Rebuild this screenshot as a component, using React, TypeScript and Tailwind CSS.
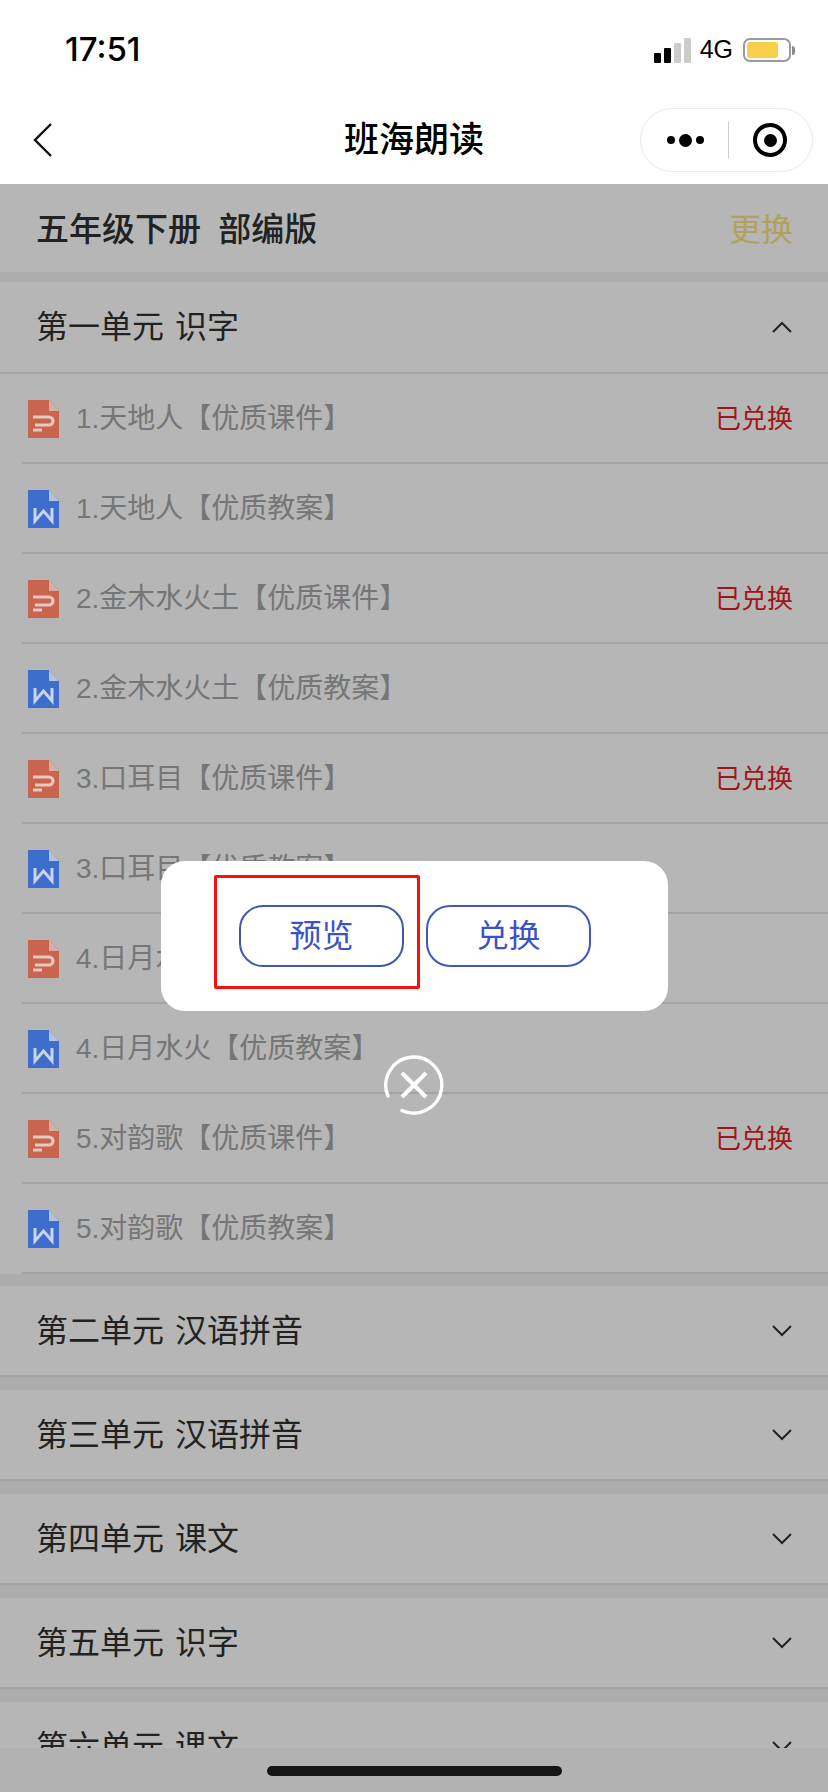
import React from 'react';

const FONT = "font-['Liberation_Sans','Noto_Sans_CJK_SC',sans-serif]";

const rows = [
  { type: 'p', title: '1.天地人【优质课件】', done: true },
  { type: 'w', title: '1.天地人【优质教案】', done: false },
  { type: 'p', title: '2.金木水火土【优质课件】', done: true },
  { type: 'w', title: '2.金木水火土【优质教案】', done: false },
  { type: 'p', title: '3.口耳目【优质课件】', done: true },
  { type: 'w', title: '3.口耳目【优质教案】', done: false },
  { type: 'p', title: '4.日月水火【优质课件】', done: false },
  { type: 'w', title: '4.日月水火【优质教案】', done: false },
  { type: 'p', title: '5.对韵歌【优质课件】', done: true },
  { type: 'w', title: '5.对韵歌【优质教案】', done: false },
];

const units = ['第二单元 汉语拼音', '第三单元 汉语拼音', '第四单元 课文', '第五单元 识字', '第六单元 课文'];

// sits above the scrim so it keeps the saturated colours of the picture
const FileIcon = ({ type }: { type: string }) => (
  <svg width="31" height="38" viewBox="0 0 31 38" className="shrink-0 relative z-20">
    <path d="M0 0H21L31 11V38H0Z" fill={type === 'p' ? '#c9654f' : '#3f6dcc'} />
    <path d="M21 0L31 11H21Z" fill={type === 'p' ? '#d2b0a6' : '#b4c2d6'} />
    {type === 'p' ? (
      <path d="M5 17H21A4 4 0 0 1 21 25H7M5 30H14" fill="none" stroke="#e6c8be" strokeWidth="3.2" />
    ) : (
      <path d="M7 18V31L15.5 21L24 31V18" fill="none" stroke="#c8d4ee" strokeWidth="3" />
    )}
  </svg>
);

const Chevron = ({ up }: { up?: boolean }) => (
  <svg width="22" height="14" viewBox="0 0 22 14">
    <path d={up ? 'M2 12L11 3L20 12' : 'M2 2L11 11L20 2'} fill="none" stroke="#333333" strokeWidth="2" />
  </svg>
);

const UnitHeader = ({ title, up, tall }: { title: string; up?: boolean; tall?: boolean }) => (
  <div className={`${tall ? 'h-[92px]' : 'h-[91px]'} shrink-0 flex items-center justify-between pl-[36px] pr-[35px] bg-white border-b-2 border-[#e6e6e6]`}>
    <span className="text-[32px] text-[#303030] [word-spacing:2px]">{title}</span>
    <Chevron up={up} />
  </div>
);

export default function App() {
  return (
    <div className={`${FONT} relative w-[828px] h-[1792px] overflow-hidden bg-white flex flex-col`}>
      <div className="h-[88px] shrink-0 flex items-center justify-between pl-[65px] pr-[33px] pt-[12px]">
        <span className="text-[33px] font-['Inter',sans-serif] font-medium text-black">17:51</span>
        <div className="flex items-center">
          <div className="flex items-end gap-[3px] h-[25px] mr-[9px]">
            <div className="w-[7px] h-[10px] bg-black rounded-[1px]" />
            <div className="w-[7px] h-[15px] bg-black rounded-[1px]" />
            <div className="w-[7px] h-[20px] bg-[#cccccc] rounded-[1px]" />
            <div className="w-[7px] h-[25px] bg-[#cccccc] rounded-[1px]" />
          </div>
          <span className="text-[25px] text-black mr-[10px]">4G</span>
          <div className="w-[48px] h-[24px] rounded-[7px] border-2 border-[#9a9a9a] p-[2px]">
            <div className="w-[31px] h-full rounded-[3px] bg-[#f8cf4a]" />
          </div>
          <div className="w-[3px] h-[9px] ml-[1px] bg-[#8a8a8a] rounded-r-full" />
        </div>
      </div>

      <div className="relative h-[96px] shrink-0 flex items-center justify-between pl-[33px] pr-[15px] pt-[8px]">
        <svg width="20" height="34" viewBox="0 0 20 34">
          <path d="M18 1L2 17L18 33" fill="none" stroke="#111111" strokeWidth="2.4" />
        </svg>
        <span className="absolute left-0 right-0 text-center text-[35px] font-medium text-black">班海朗读</span>
        <div className="w-[173px] h-[64px] rounded-full border border-[#ececec] flex items-center pl-[3px]">
          <div className="flex-1 flex items-center justify-center gap-[4px]">
            <div className="w-[8px] h-[8px] rounded-full bg-black" />
            <div className="w-[13px] h-[13px] rounded-full bg-black" />
            <div className="w-[8px] h-[8px] rounded-full bg-black" />
          </div>
          <div className="w-px h-[36px] bg-[#cccccc]" />
          <div className="flex-1 flex items-center justify-center">
            <div className="w-[34px] h-[34px] rounded-full border-[4px] border-black flex items-center justify-center">
              <div className="w-[13px] h-[13px] rounded-full bg-black" />
            </div>
          </div>
        </div>
      </div>

      <div className="flex-1 bg-[#f3f3f3] overflow-hidden flex flex-col">
        <div className="h-[88px] shrink-0 bg-white flex items-center justify-between pl-[36px] pr-[35px] pt-[3px]">
          <span className="text-[33px] font-medium text-[#303030] [word-spacing:8px]">五年级下册 部编版</span>
          <span className="text-[32px] text-[#f6e582]">更换</span>
        </div>
        <div className="h-[10px] shrink-0" />

        <UnitHeader title="第一单元 识字" up tall />
        {rows.map((row) => (
          <div key={row.title} className="h-[90px] shrink-0 bg-white pl-[22px]">
            <div className="h-full flex items-center justify-between pl-[6px] pr-[35px] pt-[2px] border-b-2 border-[#e6e6e6]">
              <div className="flex items-center gap-[17px]">
                <FileIcon type={row.type} />
                <span className="text-[28px] text-[#a6a6a6]">{row.title}</span>
              </div>
              {row.done && <span className="text-[26px] text-[#e01f1f]">已兑换</span>}
            </div>
          </div>
        ))}
        <div className="h-[12px] shrink-0" />

        {units.map((unit) => (
          <div key={unit} className="shrink-0 mb-[13px]">
            <UnitHeader title={unit} />
          </div>
        ))}
      </div>

      <div className="absolute left-0 right-0 bottom-0 h-[44px] bg-[#fafafa]" />
      <div className="absolute z-10 left-0 right-0 top-[184px] bottom-0 bg-black/[0.286]" />
      <div className="absolute z-30 left-[267px] top-[1766px] w-[295px] h-[10px] rounded-full bg-[#151515]" />

      <div className="absolute z-30 left-[161px] top-[861px] w-[507px] h-[150px] rounded-[24px] bg-white flex items-center pl-[78px] gap-[22px]">
        <button className="w-[165px] h-[62px] rounded-[24px] border-2 border-[#3f57b0] text-[32px] text-[#3b52c8]">预览</button>
        <button className="w-[165px] h-[62px] rounded-[24px] border-2 border-[#3f57c0] text-[32px] text-[#3b52c8]">兑换</button>
      </div>
      <div className="absolute z-30 left-[214px] top-[875px] w-[206px] h-[114px] border-[3px] border-[#fb0f0c] rounded-[2px]" />

      <svg className="absolute z-30 left-[384px] top-[1055px]" width="60" height="60" viewBox="0 0 60 60">
        <path d="M4 41A28 28 0 1 1 18 55.5" fill="none" stroke="#ffffff" strokeWidth="3.4" strokeLinecap="round" />
        <path d="M18 18L42 42M42 18L18 42" fill="none" stroke="#ffffff" strokeWidth="4" />
      </svg>
    </div>
  );
}
